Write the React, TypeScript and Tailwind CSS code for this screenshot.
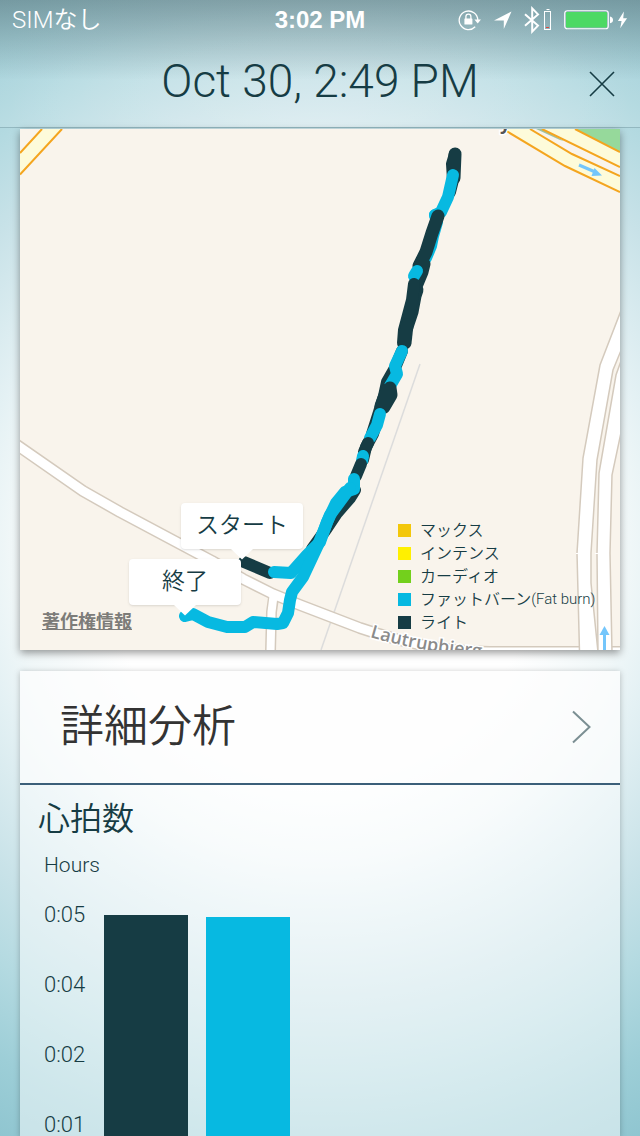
const LEGEND = [
  { label: "マックス", latin: "", swatch: "bg-[#f3c70a]" },
  { label: "インテンス", latin: "", swatch: "bg-[#fff000]" },
  { label: "カーディオ", latin: "", swatch: "bg-[#73d01c]" },
  { label: "ファットバーン", latin: "(Fat burn)", swatch: "bg-[#07b9e1]" },
  { label: "ライト", latin: "", swatch: "bg-[#163c44]" },
];

const HOURS = ["0:05", "0:04", "0:02", "0:01"];

const BARS = [
  { name: "ライト", style: "mt-3 bg-[#163c44]" },
  { name: "ファットバーン", style: "mt-3.5 bg-[#07b9e1]" },
];

function StatusIcons() {
  return (
    <div className="flex items-center justify-end text-white">
      <svg width="23" height="22" viewBox="0 0 23 22" fill="none" stroke="currentColor" strokeWidth="1.3">
        <path d="M17.2 17.8A9.3 9.3 0 1 1 19.8 11" />
        <path d="M16.4 10.6h6.6l-3.3 4z" fill="currentColor" stroke="none" />
        <rect x="6.4" y="9.6" width="8" height="6" rx="0.5" fill="currentColor" stroke="none" />
        <path d="M7.9 10V7.6a2.500 2.500 0 0 1 5 0V10" />
      </svg>
      <svg className="ml-3" width="19" height="20" viewBox="0 0 19 20" fill="currentColor">
        <path d="M18.5 1.5 10.8 19V10.6H1z" />
      </svg>
      <svg className="ml-3" width="16" height="28" viewBox="0 0 16 28" fill="none" stroke="currentColor" strokeWidth="2">
        <path d="M1 8.2 14 19.6 8.2 25.6V2.4L14 8.4 1 19.8" />
      </svg>
      <svg className="ml-1" width="8" height="22" viewBox="0 0 8 22" fill="none">
        <path d="M2.5 0.5h3" stroke="currentColor" strokeWidth="1" />
        <rect x="0.5" y="2.5" width="6" height="18" stroke="currentColor" />
        <path d="M2 18.5h3" stroke="#e0483e" />
      </svg>
      <svg className="ml-3" width="49" height="20" viewBox="0 0 49 20" fill="none">
        <rect x="0.75" y="0.75" width="43.5" height="18" rx="2.5" stroke="currentColor" strokeWidth="1.2" />
        <rect x="2" y="2" width="41" height="15.5" rx="1" fill="#4cd964" />
        <path d="M46 6.5q3 .8 3 3.4T46 13.2z" fill="currentColor" />
      </svg>
      <svg className="ml-1" width="11" height="20" viewBox="0 0 12 20" fill="currentColor">
        <path d="M7.5 0.8 1 11h4L3.5 19 11 8H6.8z" />
      </svg>
    </div>
  );
}

function Roads() {
  return (
    <>
      <path d="M41 129 20 153v21.5L62 129z" fill="#fdfbda" />
      <path d="M42 129 20 153M62 129 20 174.5" stroke="#f4a51f" strokeWidth="2" />

      <path d="M542 129h33l45 23v15z" fill="#fdfbda" />
      <path d="M503 129h27l42 25 48 22v16l-55-26z" fill="#fdfbda" />
      <path d="M575 129h45v23z" fill="#96d99b" />
      <path d="M536 129h6l22 12-4-1z" fill="#9dc3a4" />
      <path
        d="M503 129 565 166 620 192M530 129 572 154 620 176M542 129 620 167M575 129 620 152"
        fill="none"
        stroke="#f4a51f"
        strokeWidth="2"
      />
      <path d="M579 165 594 171.5" stroke="#74c6fb" strokeWidth="3" />
      <path d="M594.5 168 602 175.5 591.5 176z" fill="#74c6fb" />

      <path d="M420 364 321 650" stroke="#dcdcdc" strokeWidth="1.5" />

      <g fill="none" strokeLinejoin="round">
        <path d="M274 594 271.5 612 270.5 652" stroke="#d4cabd" strokeWidth="11" />
        <path
          d="M14 443 83 491 120 512 212 561 243 579 273 594 300 605 360 628Q430 652 490 652H640"
          stroke="#d4cabd"
          strokeWidth="12"
        />
        <path d="M274 592 271.5 612 270.5 652" stroke="#fff" strokeWidth="8" />
        <path
          d="M14 443 83 491 120 512 212 561 243 579 273 594 300 605 360 628Q430 652 490 652H640"
          stroke="#fff"
          strokeWidth="9"
        />
      </g>

      <path
        d="M622 308 600 365 583 458 577 553 579.5 652H598L591 583V553L597 460 613 370 622 348z"
        fill="#fff"
        stroke="#d4cabd"
        strokeWidth="1.5"
      />
      <path
        d="M622 358 616 375 599 473 597 553 598 652H612L610 553 612 475 622 428z"
        fill="#fff"
        stroke="#d4cabd"
        strokeWidth="1.5"
      />
      <path d="M576 553.5h7M595 553.5h7" stroke="#fff" />
      <path d="M604.5 652V634" stroke="#74c6fb" strokeWidth="3" />
      <path d="M604.5 626 609.5 635H599.5z" fill="#74c6fb" />

      <path id="street" d="M370 637Q420 652 490 658" fill="none" />
      <g fill="#8b8b8b" stroke="#fff" strokeWidth="3" paintOrder="stroke" fontFamily="Open Sans, sans-serif">
        <text fontSize="18" fontWeight="600">
          <textPath href="#street">Lautrupbjerg</textPath>
        </text>
        <text x="500" y="130" fontSize="18" fontWeight="700" fill="#555">
          y
        </text>
      </g>
    </>
  );
}

function Route() {
  return (
    <g fill="none" strokeWidth="12" strokeLinecap="round" strokeLinejoin="round">
      <g stroke="#163c44">
        <path d="M455 154 452 164 453 180 450 192" />
        <path d="M455 154 454 178" strokeWidth="13" />
        <path d="M402 351 395 368 387 382 384 396 379 412 372 434" />
        <path d="M378 418 373 434 366 447 363 460" />
        <path d="M355 490 350 498 337 513 327 528 312 549" />
      </g>
      <g stroke="#07b9e1">
        <path d="M435 215 437 222 433 236 431 246 426 258" />
        <path d="M415 288 415 297" />
        <path d="M453 175 448 197 441 212 435 215" />
      </g>
      <g stroke="#163c44" strokeWidth="13">
        <path d="M438 216 432 233 426 252 419 266 424 264 422 272 417 284" />
        <path d="M417 290 415 296 412 312 407 327" />
      </g>
      <path d="M417 271 414 276" stroke="#07b9e1" />
      <path d="M414 284 412 300 408 315 404 330 403 343" stroke="#163c44" />
      <path d="M407 325 405 343" stroke="#163c44" strokeWidth="13" />
      <path d="M402 351 395 366 397 374 390 386" stroke="#07b9e1" />
      <path d="M390 388 391 395 384 407 381 406 387 390" stroke="#163c44" strokeWidth="13" />
      <path d="M380 414 377 425 370 438" stroke="#07b9e1" />
      <path d="M368 443 364 452" stroke="#163c44" />
      <path d="M363 456 362 461" stroke="#07b9e1" />
      <path d="M361 464 356 476" stroke="#163c44" />
      <path d="M244 562 270 573" stroke="#163c44" />
      <g stroke="#07b9e1">
        <path d="M354 479V489L345 492 336 503 327 522 320 542 307 555 291 573 274 572" />
        <path d="M350 488 330 515 318 545 303 577 292 592 290 600 288 613 283 623 277 624 253 622 245 627H227L208 622 193 614 185 616" />
      </g>
    </g>
  );
}

interface CalloutProps {
  text: string;
  className: string;
}

function Callout({ text, className }: CalloutProps) {
  return (
    <div
      className={`absolute flex h-[46px] items-center justify-center rounded bg-white pb-0.5 text-[23px] leading-none shadow-sm ${className}`}
    >
      {text}
      <svg className="absolute top-full left-1/2 -translate-x-1/2" width="22" height="11" viewBox="0 0 22 11" fill="#fff">
        <path d="M0 0h22L11 10.5z" />
      </svg>
    </div>
  );
}

function RouteMap() {
  return (
    <section className="relative h-[521px] overflow-hidden bg-[#f9f4ec] shadow-[0_3px_8px_rgba(0,0,0,0.4)]">
      <svg className="block h-full w-full" viewBox="20 129 600 521" preserveAspectRatio="xMidYMid slice">
        <Roads />
        <Route />
      </svg>
      <Callout text="スタート" className="top-[374px] left-[161px] w-[122px]" />
      <Callout text="終了" className="top-[430px] left-[109px] w-[112px]" />
      <ul className="absolute top-[390px] left-[378px] text-base">
        {LEGEND.map((item) => (
          <li key={item.label} className="flex h-[23px] items-center whitespace-nowrap">
            <span className={`mr-[9px] size-[13px] ${item.swatch}`} />
            {item.label}
            <span className="text-[15px]">{item.latin}</span>
          </li>
        ))}
      </ul>
      <a
        href="#legal"
        className="absolute bottom-3.5 left-[22px] text-lg leading-7 font-bold text-[#7d7c79] underline"
      >
        著作権情報
      </a>
    </section>
  );
}

export default function App() {
  return (
    <div className="flex min-h-screen flex-col bg-[radial-gradient(circle_at_50%_550px,#ffffff_0px,#ffffff_220px,#f0f7f8_310px,#e4f1f4_350px,#c8e2e8_450px,#b4dae1_520px,#9dced7_600px,#8dc4cf_680px)] font-['Roboto','Noto_Sans_CJK_JP',sans-serif] font-[350] text-[#163c44]">
      <header className="border-b border-[#93b8c0] bg-[linear-gradient(rgba(40,60,66,0.36),rgba(40,60,66,0)_80px),radial-gradient(ellipse_at_50%_100%,rgba(255,255,255,0.3),rgba(255,255,255,0.1)_70%)]">
        <div className="grid h-10 grid-cols-3 items-center px-3 text-[24px] text-white">
          <span>SIMなし</span>
          <time className="text-center font-['Liberation_Sans',sans-serif] font-bold">3:02 PM</time>
          <StatusIcons />
        </div>
        <div className="flex h-[87px] items-start px-5 pt-[13px]">
          <span className="w-10" />
          <h1 className="flex-1 text-center text-[46px] leading-[56px] font-light">Oct 30, 2:49 PM</h1>
          <button type="button" aria-label="Close" className="flex h-[62px] w-10 items-center justify-end pr-1">
            <svg width="28" height="28" viewBox="0 0 28 28" fill="none" stroke="currentColor" strokeWidth="1.6">
              <path d="M2 2 26 26M26 2 2 26" />
            </svg>
          </button>
        </div>
      </header>

      <main className="flex flex-1 flex-col px-5 pt-px">
        <RouteMap />

        <section className="mt-[21px] flex flex-1 flex-col shadow-[0_1px_6px_rgba(0,0,0,0.25)]">
          <button
            type="button"
            className="flex h-[114px] items-center justify-between border-b-2 border-[#3b5f79] bg-[#fdfdfd]/75 pr-7 pl-10 text-[44px] text-[#333]"
          >
            詳細分析
            <svg width="21" height="34" viewBox="0 0 21 34" fill="none" stroke="#7b8f93" strokeWidth="2">
              <path d="M2 1.5 18.5 17 2 32.5" />
            </svg>
          </button>

          <div className="flex flex-1 flex-col overflow-hidden bg-white/50 px-6">
            <h2 className="-ml-1.5 pt-3 text-[32px] leading-[44px]">心拍数</h2>
            <p className="pt-3 text-[21px] leading-6 font-light">Hours</p>
            <div className="flex flex-1 pt-[26px]">
              <ul className="flex w-[60px] flex-col gap-[46px] text-[22px] leading-6 font-light">
                {HOURS.map((hour) => (
                  <li key={hour}>{hour}</li>
                ))}
              </ul>
              <div className="flex gap-[18px]">
                {BARS.map((bar) => (
                  <div key={bar.name} role="img" aria-label={bar.name} className={`w-[84px] ${bar.style}`} />
                ))}
              </div>
            </div>
          </div>
        </section>
      </main>
    </div>
  );
}
